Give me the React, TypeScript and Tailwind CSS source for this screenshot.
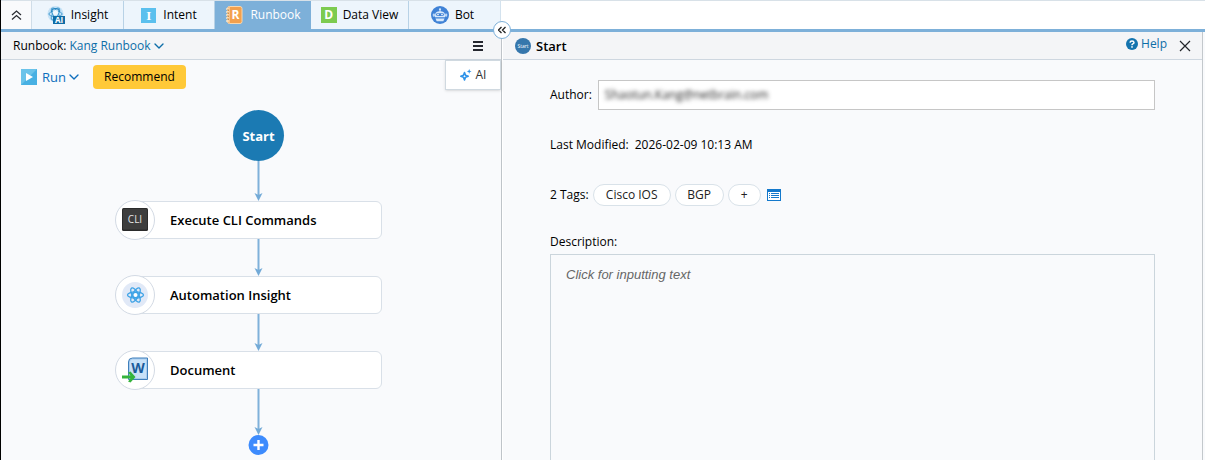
import { ReactNode } from "react";
import clsx from "clsx";
import { ChevronDown, X } from "lucide-react";

function InsightIcon() {
  return (
    <svg className="w-[18px] h-[18px] shrink-0" viewBox="0 0 18 18" fill="none">
      <circle cx="8.5" cy="8" r="8" fill="#c5e2f6" />
      <g stroke="#4a9fd3" strokeWidth="1">
        <ellipse cx="8.5" cy="8" rx="6.6" ry="2.7" transform="rotate(60 8.5 8)" />
        <ellipse cx="8.5" cy="8" rx="6.6" ry="2.7" transform="rotate(-60 8.5 8)" />
        <ellipse cx="8.5" cy="8" rx="6.6" ry="2.7" />
      </g>
      <path d="M4.5 6Q5 2.500 8.500 2.500T12.500 6" stroke="#2787c0" strokeWidth="1.2" />
      <circle cx="8.5" cy="6.5" r="2.6" fill="#eef7fd" />
      <rect x="6" y="10" width="12" height="8" fill="#0f6ca6" />
      <text x="12" y="17" textAnchor="middle" fontSize="8" fontWeight="700" fill="#fff" fontFamily="Open Sans, sans-serif">
        AI
      </text>
    </svg>
  );
}

function RunbookIcon() {
  return (
    <svg className="w-[18px] h-[18px] shrink-0" viewBox="0 0 18 18" fill="none">
      <rect x="2.5" y="0.5" width="14.5" height="17" rx="2" fill="#f3a04d" stroke="#fbd7ab" />
      <path d="M4.5 1v16" stroke="#f9c48b" />
      <path d="M1 3h3M1 6h3M1 9h3M1 12h3M1 15h3" stroke="#fbe3c4" strokeWidth="1.6" />
      <path d="M2 4h2M2 7h2M2 10h2M2 13h2" stroke="#a8783e" strokeWidth="0.7" />
      <text x="10.5" y="13.2" textAnchor="middle" fontSize="12" fontWeight="700" fill="#fff" fontFamily="Open Sans, sans-serif">
        R
      </text>
    </svg>
  );
}

function BotIcon() {
  return (
    <svg className="w-[18px] h-[18px] shrink-0" viewBox="0 0 18 18" fill="none">
      <circle cx="9" cy="9" r="9" fill="#3f82d6" />
      <circle cx="9" cy="3.3" r="1.1" fill="#d8e9fb" />
      <path d="M9 4v2" stroke="#d8e9fb" />
      <rect x="1.8" y="7.4" width="2.2" height="3.4" rx="1" fill="#b9d6f6" />
      <rect x="14" y="7.4" width="2.2" height="3.4" rx="1" fill="#b9d6f6" />
      <path d="M4 9.500Q4 5.300 9 5.300T14 9.500V11.200H4Z" fill="#d8e9fb" />
      <rect x="5" y="7.200" width="8" height="2.800" rx="1.4" fill="#3f82d6" />
      <circle cx="7" cy="8.6" r="0.8" fill="#fff" />
      <circle cx="11" cy="8.6" r="0.8" fill="#fff" />
      <path d="M4.500 12.600h9L12.300 15.200H5.700Z" fill="#d8e9fb" />
    </svg>
  );
}

function SparkleIcon() {
  return (
    <svg className="w-3 h-3" viewBox="0 0 12 12" fill="none">
      <path d="M4.5 3.500 5.5 6.200 8.2 7.200 5.5 8.2 4.5 10.900 3.5 8.2 .8 7.200 3.500 6.200Z" stroke="#2f93e8" strokeWidth="1.6" strokeLinejoin="round" />
      <path d="M9.2 0 9.9 1.7 11.6 2.4 9.9 3.1 9.2 4.8 8.5 3.1 6.8 2.4 8.5 1.7Z" fill="#2f93e8" />
    </svg>
  );
}

function CliIcon() {
  return (
    <svg className="w-[26px] h-[26px]" viewBox="0 0 26 26">
      <rect x="0" y="1" width="26" height="23" rx="1.5" fill="#2b2b2b" />
      <rect x="1" y="2" width="24" height="20.5" rx="1" fill="#3d3d3d" />
      <text x="13" y="16" textAnchor="middle" fontSize="10" fontWeight="500" fill="#e4e4e4" fontFamily="Open Sans, sans-serif">
        CLI
      </text>
    </svg>
  );
}

function AtomIcon() {
  return (
    <svg className="w-[26px] h-[26px]" viewBox="0 0 26 26" fill="none">
      <circle cx="13" cy="13" r="13" fill="#e1e9f7" />
      <g stroke="#3ea3e6" strokeWidth="1.3">
        <ellipse cx="13.5" cy="13" rx="8" ry="3.1" />
        <ellipse cx="13.5" cy="13" rx="8" ry="3.1" transform="rotate(60 13.5 13)" />
        <ellipse cx="13.5" cy="13" rx="8" ry="3.1" transform="rotate(-60 13.5 13)" />
        <circle cx="13.5" cy="13" r="2.7" fill="#fff" />
      </g>
    </svg>
  );
}

function WordIcon() {
  return (
    <svg className="w-[26px] h-[26px]" viewBox="0 0 26 26" fill="none">
      <path d="M10.500 1h15v21.500H6.500V5Q6.500 1 10.500 1Z" fill="#a9ccee" stroke="#3f7fbb" />
      <path d="M11 2.500h13v18.500H8V5.500Q8 2.500 11 2.500Z" fill="#c8e1f8" />
      <text x="16" y="15.500" textAnchor="middle" fontSize="14" fontWeight="700" fill="#1b5b9b" fontFamily="Open Sans, sans-serif">
        W
      </text>
      <path d="M0 18.500h8.500L6 15.500 8.500 14.500 13.500 20 8.500 25.500 6 24.500 8.500 21.500H0Z" fill="#35b43c" />
    </svg>
  );
}

function TagListIcon() {
  return (
    <svg className="w-[14px] h-3" viewBox="0 0 14 12" fill="none">
      <rect x="0.5" y="0.5" width="13" height="11" fill="#fff" stroke="#1479cc" />
      <rect width="14" height="3" fill="#1479cc" />
      <path d="M2 4.500h1M4 4.500h8M2 6.500h1M4 6.500h8M2 8.500h1M4 8.500h8" stroke="#1479cc" />
    </svg>
  );
}

function LetterIcon({ letter, className }: { letter: string; className: string }) {
  return (
    <span className={clsx("flex shrink-0 items-center justify-center leading-none font-bold text-white", className)}>
      {letter}
    </span>
  );
}

const tabs = [
  { label: "Insight", icon: <InsightIcon />, className: "w-[92px] gap-[6px] border-r border-[#b8d2e6]" },
  {
    label: "Intent",
    icon: <LetterIcon letter="I" className="h-[15px] w-[15px] bg-[#5bc0ee] text-[13px] font-['Liberation_Serif',serif]" />,
    className: "w-[91px] gap-[7px] border-r border-[#b8d2e6]",
  },
  { label: "Runbook", icon: <RunbookIcon />, className: "w-24 gap-[7px]", active: true },
  {
    label: "Data View",
    icon: <LetterIcon letter="D" className="h-4 w-4 bg-[#7ccb50] text-xs" />,
    className: "w-[98px] gap-[6px] border-r border-[#b8d2e6]",
  },
  { label: "Bot", icon: <BotIcon />, className: "w-[92px] gap-[6px] border-r border-[#d3e2ee] pr-1" },
];

const nodes = [
  { title: "Execute CLI Commands", icon: <CliIcon />, arrow: 37 },
  { title: "Automation Insight", icon: <AtomIcon />, arrow: 37 },
  { title: "Document", icon: <WordIcon />, arrow: 46 },
];

function Arrow({ length }: { length: number }) {
  return (
    <svg width="9" height={length} viewBox={`0 0 9 ${length}`} className="shrink-0">
      <path d={`M4.5 0V${length - 4}`} stroke="#7fb1da" strokeWidth="2" />
      <path d={`M0.5 ${length - 8}L4.5 ${length - 6}L8.5 ${length - 8}L4.500 ${length}Z`} fill="#73aad7" />
    </svg>
  );
}

function FlowNode({ title, icon }: { title: string; icon: ReactNode }) {
  return (
    <div className="flex h-[38px] w-full shrink-0 items-center rounded-md border border-[#d9e0e8] bg-white">
      <div className="-ml-[21px] flex h-10 w-10 shrink-0 items-center justify-center rounded-full border border-[#d3dae4] bg-white">
        {icon}
      </div>
      <span className="ml-[15px] text-[13px] leading-4 font-semibold">{title}</span>
    </div>
  );
}

function RunbookPanel() {
  return (
    <section className="relative flex w-[501px] shrink-0 flex-col border-r border-[#bfc4c9]">
      <div className="flex h-7 shrink-0 items-center border-b border-[#ced7e0] bg-[#f4f5f7] pl-3">
        <span>Runbook:</span>
        <button className="ml-[3px] flex items-center text-[#0d6ea8]">
          Kang Runbook
          <ChevronDown className="h-4 w-4" strokeWidth={2} />
        </button>
        <button aria-label="Menu" className="mr-[18px] ml-auto">
          <svg className="h-[10px] w-[10px]" viewBox="0 0 10 10">
            <path d="M0 1h10M0 5h10M0 9h10" stroke="#25272f" strokeWidth="2" />
          </svg>
        </button>
      </div>
      <button className="absolute top-7 right-0 flex h-[30px] w-14 items-center justify-center gap-1 border border-[#d0d9e0] bg-white text-[#333] shadow-sm">
        <SparkleIcon />
        AI
      </button>

      <div className="mt-[5px] flex h-6 shrink-0 items-center pl-5">
        <button className="flex w-[60px] items-center text-[13px] text-[#0d6ebd]">
          <svg className="mr-[5px] h-4 w-4 shrink-0" viewBox="0 0 16 16">
            <rect width="16" height="16" fill="#48b0e3" />
            <path d="M0 0h16L0 16Z" fill="#6bc3ea" />
            <path d="M5 4v8l7-4Z" fill="#fff" />
          </svg>
          Run
          <ChevronDown className="h-4 w-4 shrink-0" strokeWidth={2} />
        </button>
        <button className="ml-3 h-6 w-[93px] rounded bg-[#ffc938] text-black">Recommend</button>
      </div>

      <div className="mt-[21px] ml-[134px] flex w-[247px] flex-col items-center">
        <div className="flex h-[51px] w-[51px] shrink-0 items-center justify-center rounded-full bg-[#1b7ab3] text-[13px] font-bold text-white">
          Start
        </div>
        <Arrow length={40} />
        {nodes.map((node) => (
          <div key={node.title} className="flex w-full flex-col items-center">
            <FlowNode title={node.title} icon={node.icon} />
            <Arrow length={node.arrow} />
          </div>
        ))}
        <button aria-label="Add node" className="shrink-0">
          <svg className="h-5 w-[21px]" viewBox="0 0 21 20">
            <circle cx="10.5" cy="10" r="10" fill="#3d8bfd" />
            <path d="M10.500 5v10M5.500 10h10" stroke="#fff" strokeWidth="2.4" />
          </svg>
        </button>
      </div>
    </section>
  );
}

function StartPanel() {
  return (
    <section className="mr-[2px] flex min-w-0 flex-1 flex-col border-r border-l border-r-[#c3c8cc] border-l-white">
      <header className="flex h-7 shrink-0 items-center border-b border-[#ced7e0] bg-[#f4f5f7] pr-[9px] pl-3">
        <span aria-hidden="true" className="flex h-4 w-4 items-center justify-center rounded-full bg-[#3677ac] text-[5px] text-white">
          Start
        </span>
        <h2 className="ml-[5px] text-[13px] font-semibold">Start</h2>
        <a href="#help" className="mb-[3px] ml-auto flex items-center gap-[3px] text-[#0d6ea8]">
          <svg className="h-3 w-3" viewBox="0 0 12 12">
            <circle cx="6" cy="6" r="6" fill="#1474ae" />
            <path d="M4 4.600Q4.200 2.900 6 2.900T8 4.500Q8 5.400 6.800 5.900Q6 6.300 6 7.200" fill="none" stroke="#fff" strokeWidth="1.500" />
            <rect x="5.200" y="8.200" width="1.600" height="1.500" fill="#fff" />
          </svg>
          Help
        </a>
        <button aria-label="Close" className="ml-[10px] text-[#22252a]">
          <svg className="h-4 w-4" viewBox="0 0 16 16">
            <path d="M3 3l10 10M13 3L3 13" stroke="#22252a" strokeWidth="1.2" />
          </svg>
        </button>
      </header>

      <div className="flex min-h-0 flex-1 flex-col px-[47px] pt-5">
        <div className="flex shrink-0 items-center">
          <label htmlFor="author">Author:</label>
          <div className="ml-[6px] flex h-[30px] flex-1 items-center border border-[#c6c6c6] bg-white px-[6px]">
            <input
              id="author"
              readOnly
              defaultValue="Shaotun.Kang@netbrain.com"
              className="w-full text-xs text-[#222] outline-none blur-[2px]"
            />
          </div>
        </div>

        <p className="mt-[27px] shrink-0">
          Last Modified:<span className="ml-[6px]">2026-02-09 10:13 AM</span>
        </p>

        <div className="mt-[31px] flex h-[22px] shrink-0 items-center">
          <span>2 Tags:</span>
          <div className="ml-1 flex gap-1 text-[#222]">
            <button className="h-[22px] w-[78px] rounded-full border border-[#d9e2e9] bg-white">Cisco IOS</button>
            <button className="h-[22px] w-[49px] rounded-full border border-[#d9e2e9] bg-white">BGP</button>
            <button aria-label="Add tag" className="h-[22px] w-[33px] rounded-full border border-[#d9e2e9] bg-white">
              +
            </button>
          </div>
          <button aria-label="Manage tags" className="ml-[6px]">
            <TagListIcon />
          </button>
        </div>

        <label htmlFor="description" className="mt-7 shrink-0">
          Description:
        </label>
        <textarea
          id="description"
          placeholder="Click for inputting text"
          className="mt-1 w-full flex-1 resize-none border border-b-0 border-[#cbd5dc] px-[15px] py-3 font-['Liberation_Sans',Arial,sans-serif] text-[13px] leading-4 italic outline-none placeholder:text-[#666]"
        />
      </div>
    </section>
  );
}

export default function App() {
  return (
    <main className="flex h-screen flex-col overflow-hidden border-l border-black bg-[#f9fafc] font-['Open_Sans',sans-serif] text-xs leading-4 text-black">
      <nav className="flex h-8 shrink-0 border-t border-b-[3px] border-t-[#d8e1e8] border-b-[#7db0d9] bg-white">
        <button aria-label="Collapse" className="flex w-[31px] items-center justify-center border-r border-[#cfdde8] bg-[#f9fafc]">
          <svg className="h-[10px] w-[11px]" viewBox="0 0 11 10" fill="none">
            <path d="M1 5l4.500-4L10 5M1 9.500l4.500-4 4.500 4" stroke="#2b2d33" strokeWidth="1.3" />
          </svg>
        </button>
        {tabs.map((tab) => (
          <button
            key={tab.label}
            className={clsx("flex items-center justify-center", tab.className, tab.active ? "bg-[#7db0d9] text-white" : "bg-[#edf5fc]")}
          >
            {tab.icon}
            {tab.label}
          </button>
        ))}
      </nav>
      <div className="relative flex min-h-0 flex-1">
        <RunbookPanel />
        <StartPanel />
        <button
          aria-label="Collapse panel"
          className="absolute -top-[11px] left-[492px] flex h-[18px] w-[18px] items-center justify-center rounded-full border border-[#7db0d9] bg-white"
        >
          <svg className="h-2 w-2" viewBox="0 0 8 8" fill="none">
            <path d="M3.500 1l-3 3 3 3M7.500 1l-3 3 3 3" stroke="#222" strokeWidth="1.3" />
          </svg>
        </button>
      </div>
    </main>
  );
}
